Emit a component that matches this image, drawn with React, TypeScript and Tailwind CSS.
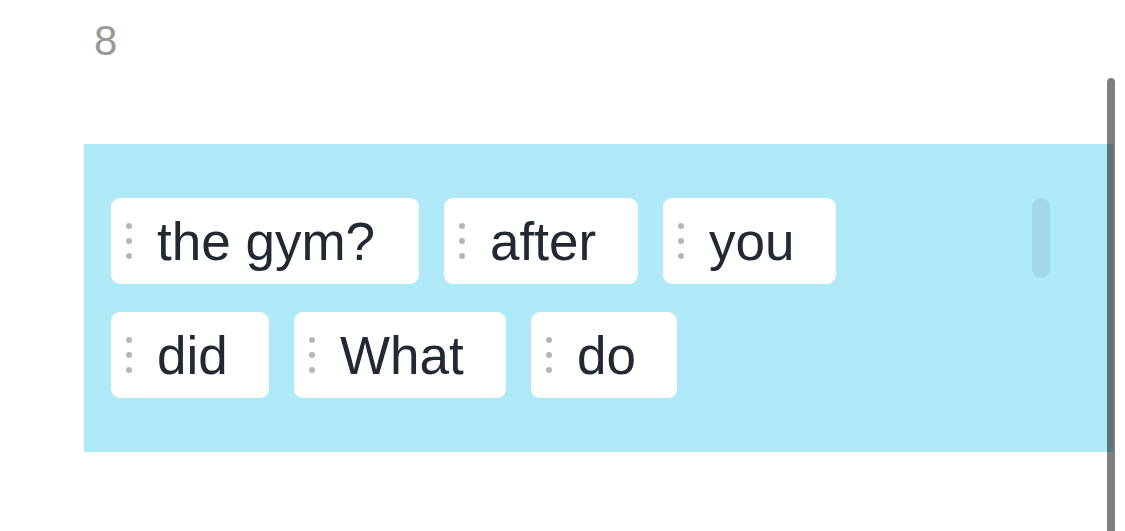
import React from "react";

type Word = { text: string; w: string };

const rows: Word[][] = [
  [
    { text: "the gym?", w: "w-[308px]" },
    { text: "after", w: "w-[194px]" },
    { text: "you", w: "w-[173px]" },
  ],
  [
    { text: "did", w: "w-[158px]" },
    { text: "What", w: "w-[212px]" },
    { text: "do", w: "w-[146px]" },
  ],
];

function Grip() {
  return (
    <div className="flex flex-col gap-[9px]">
      <span className="block h-[6px] w-[6px] rounded-full bg-[#b5b5b5]" />
      <span className="block h-[6px] w-[6px] rounded-full bg-[#b5b5b5]" />
      <span className="block h-[6px] w-[6px] rounded-full bg-[#b5b5b5]" />
    </div>
  );
}

function Chip({ word }: { word: Word }) {
  return (
    <div className={`flex h-[86px] shrink-0 items-center rounded-[9px] bg-white pl-[15px] ${word.w}`}>
      <Grip />
      <span className="ml-[25px] whitespace-nowrap text-[53px] leading-none text-[#212933]">
        {word.text}
      </span>
    </div>
  );
}

export default function App() {
  return (
    <div
      className="relative h-[531px] w-full overflow-hidden bg-white pl-[84px] pr-[12px]"
      style={{ fontFamily: '"Liberation Sans", Arial, sans-serif' }}
    >
      <div className="ml-[10px] pt-[20px] text-[42px] leading-none text-[#999999]">8</div>

      <div className="relative mt-[82px] h-[308px] bg-[#b0eaf9] pl-[27px] pt-[54px]">
        <div className="flex flex-col gap-[28px]">
          {rows.map((row, i) => (
            <div key={i} className="flex gap-[25px]">
              {row.map((w) => (
                <Chip key={w.text} word={w} />
              ))}
            </div>
          ))}
        </div>
        {/* inner scroll thumb */}
        <div className="absolute right-[63px] top-[54px] h-[80px] w-[18px] rounded-full bg-[#a2d8e8]" />
      </div>

      {/* page scrollbar */}
      <div className="absolute right-[10px] top-[78px] h-[470px] w-[8px] rounded-t-full bg-black/50" />
    </div>
  );
}
